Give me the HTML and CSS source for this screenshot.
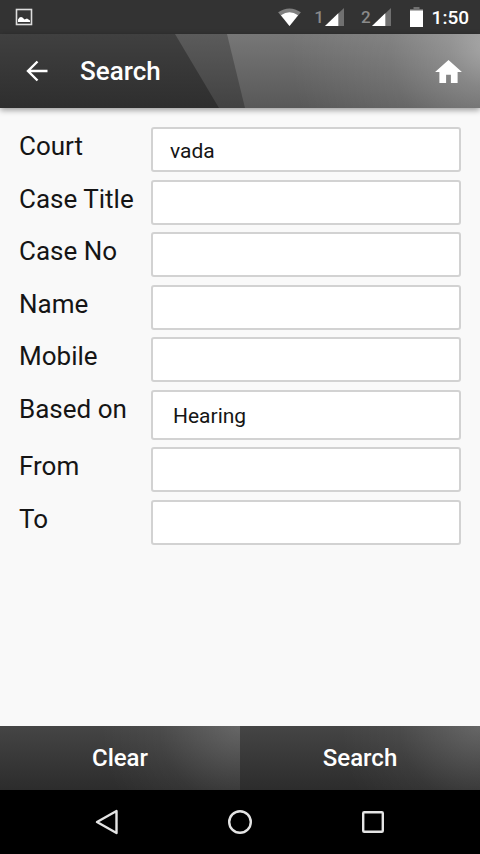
FILE: index.html
```html
<!DOCTYPE html>
<html lang="en">
<head>
<meta charset="utf-8">
<meta name="viewport" content="width=device-width, initial-scale=1">
<title>Search</title>
<link rel="stylesheet" href="styles.css">
</head>
<body>
<div class="status">
  <svg class="picture" width="18" height="18" viewBox="0 0 18 18"><rect x="1.5" y="1.5" width="15" height="15" fill="none" stroke="#ddd" stroke-width="1.6"/><path d="M3 14V11.500Q5 8 7.500 9.500L9.500 11.500L12 10.500L15 12.500V14Z" fill="#fff"/></svg>
  <div class="indicators">
    <svg width="23" height="19" viewBox="0 0 24 20"><path d="M0 4.500Q12-3.500 24 4.500L12 19Z" fill="#808080"/><path d="M3 7.500Q12 1.500 21 7.500L12 19Z" fill="#fff"/></svg>
    <span class="signal"><span>1</span><svg width="19" height="18" viewBox="0 0 20 19"><path d="M0 19L20 0V19Z" fill="#707070"/><path d="M0 19L14 5.500V19Z" fill="#fff"/></svg></span>
    <span class="signal"><span>2</span><svg width="19" height="18" viewBox="0 0 20 19"><path d="M0 19L20 0V19Z" fill="#707070"/><path d="M0 19L14 5.500V19Z" fill="#fff"/></svg></span>
    <svg class="battery" width="13" height="20" viewBox="0 0 13 20"><path d="M0 2H3.500V0H9.500V2H13V4H0Z" fill="#707070"/><path d="M0 3.500H13V20H0Z" fill="#fff"/></svg>
    <time>1:50</time>
  </div>
</div>
<header class="appbar">
  <svg class="facets" viewBox="0 0 480 74" preserveAspectRatio="none" aria-hidden="true">
    <defs>
      <linearGradient id="dark" x1="0" y1="0" x2="0" y2="1"><stop offset="0" stop-color="#404040"/><stop offset="1" stop-color="#2e2e2e"/></linearGradient>
      <linearGradient id="middle" x1="0" y1="0" x2="0" y2="1"><stop offset="0" stop-color="#5b5b5b"/><stop offset="1" stop-color="#424242"/></linearGradient>
      <linearGradient id="light" x1="0" y1="0" x2="0" y2="1"><stop offset="0" stop-color="#777"/><stop offset="1" stop-color="#585858"/></linearGradient>
      <radialGradient id="glow" gradientUnits="userSpaceOnUse" cx="490" cy="15" r="200"><stop offset="0" stop-color="#fff" stop-opacity=".38"/><stop offset=".2" stop-color="#fff" stop-opacity=".23"/><stop offset=".5" stop-color="#fff" stop-opacity=".09"/><stop offset="1" stop-color="#fff" stop-opacity="0"/></radialGradient>
    </defs>
    <rect width="480" height="74" fill="url(#light)"/>
    <path d="M0 0H227L245 74H0Z" fill="url(#middle)"/>
    <path d="M0 0H175L219 74H0Z" fill="url(#dark)"/>
    <rect x="280" width="200" height="74" fill="url(#glow)"/>
  </svg>
  <a class="icon" href="#back" aria-label="Back"><svg width="22" height="22" viewBox="0 0 22 22"><path d="M11.500 1.500L2 11L11.500 20.500M2 11H21.500" fill="none" stroke="#fff" stroke-width="2.400"/></svg></a>
  <h1>Search</h1>
  <a class="icon" href="#home" aria-label="Home"><svg width="27" height="23" viewBox="0 0 28 24"><path d="M14 0L28 12.500H23.500V24H16.500V15.500H11.500V24H4.500V12.500H0Z" fill="#fff"/></svg></a>
</header>
<main>
  <form id="search-form" class="form">
    <div class="row"><label for="court">Court</label><input id="court" class="field" type="text" value="vada"></div>
    <div class="row"><label for="title">Case Title</label><input id="title" class="field" type="text"></div>
    <div class="row"><label for="number">Case No</label><input id="number" class="field" type="text"></div>
    <div class="row"><label for="name">Name</label><input id="name" class="field" type="text"></div>
    <div class="row"><label for="mobile">Mobile</label><input id="mobile" class="field" type="tel"></div>
    <div class="row"><label for="based">Based on</label><select id="based" class="field choice"><option>Hearing</option></select></div>
    <div class="row"><label for="from">From</label><input id="from" class="field" type="text"></div>
    <div class="row"><label for="to">To</label><input id="to" class="field" type="text"></div>
  </form>
</main>
<div class="actions">
  <button type="reset" form="search-form">Clear</button>
  <button type="submit" form="search-form">Search</button>
</div>
<nav class="system">
  <button type="button" aria-label="Back"><svg width="26" height="28" viewBox="0 0 26 28"><path d="M3 14L22.500 3V25Z" fill="none" stroke="#e4e4e4" stroke-width="2.400" stroke-linejoin="round"/></svg></button>
  <button type="button" aria-label="Home"><svg width="26" height="26" viewBox="0 0 26 26"><circle cx="13" cy="13" r="10.800" fill="none" stroke="#e4e4e4" stroke-width="2.400"/></svg></button>
  <button type="button" aria-label="Recent apps"><svg width="26" height="26" viewBox="0 0 26 26"><rect x="3.200" y="3.200" width="19.600" height="19.600" rx="1" fill="none" stroke="#e4e4e4" stroke-width="2.400"/></svg></button>
</nav>
</body>
</html>
```
FILE: styles.css
```css
* {
  box-sizing: border-box;
}

body {
  margin: 0;
  min-height: 100vh;
  display: flex;
  flex-direction: column;
  background: #f9f9f9;
  color: #151515;
  font-family: Roboto, "Liberation Sans", sans-serif;
}

svg {
  display: block;
}

.status {
  height: 34px;
  padding: 0 11px 0 15px;
  display: flex;
  align-items: center;
  justify-content: space-between;
  background: #333;
  color: #fff;
}

.indicators {
  display: flex;
  align-items: center;
}

.signal {
  display: flex;
  align-items: center;
  gap: 1px;
  margin-left: 13px;
  color: #8a8a8a;
  font-size: 17px;
  font-weight: 500;
}

.signal + .signal {
  margin-left: 17px;
}

.battery {
  margin: 0 9px 0 19px;
}

time {
  font-size: 19px;
  font-weight: 500;
}

.appbar {
  position: relative;
  height: 74px;
  padding: 0 18px 0 26px;
  display: flex;
  align-items: center;
  color: #fff;
  box-shadow: 0 2px 6px rgba(0, 0, 0, 0.4);
}

.facets {
  position: absolute;
  inset: 0;
  width: 100%;
  height: 100%;
  z-index: -1;
}

.appbar h1 {
  flex: 1;
  margin: 0 0 0 32px;
  font-size: 26px;
  line-height: 32px;
  font-weight: 500;
}

main {
  flex: 1;
  padding: 19px;
}

.form {
  min-height: 418px;
  display: flex;
  flex-direction: column;
  justify-content: space-between;
}

.row {
  display: grid;
  grid-template-columns: 132px 1fr;
  align-items: start;
}

label {
  padding-top: 3px;
  font-size: 26px;
  line-height: 32px;
}

.field {
  width: 100%;
  height: 45px;
  margin: 0;
  padding: 3px 17px 0;
  border: 2px solid #d2d2d2;
  border-radius: 3px;
  background: #fff;
  color: #151515;
  font-family: inherit;
  font-size: 21px;
  appearance: none;
}

.choice {
  height: 50px;
  padding: 3px 20px 0;
}

.actions {
  display: grid;
  grid-template-columns: 1fr 1fr;
}

.actions button {
  height: 64px;
  padding: 0;
  border: 0;
  background:
    radial-gradient(circle at 100% 0, rgba(255, 255, 255, 0.18), rgba(255, 255, 255, 0.1) 45px, rgba(255, 255, 255, 0.04) 80px, transparent 140px),
    linear-gradient(#454545, #2c2c2c);
  color: #fff;
  font-family: inherit;
  font-size: 24px;
  font-weight: 500;
}

.system {
  height: 64px;
  padding: 0 40px;
  display: grid;
  grid-template-columns: repeat(3, 1fr);
  justify-items: center;
  align-items: center;
  background: #000;
}

.system button {
  padding: 0;
  border: 0;
  background: none;
}
```
